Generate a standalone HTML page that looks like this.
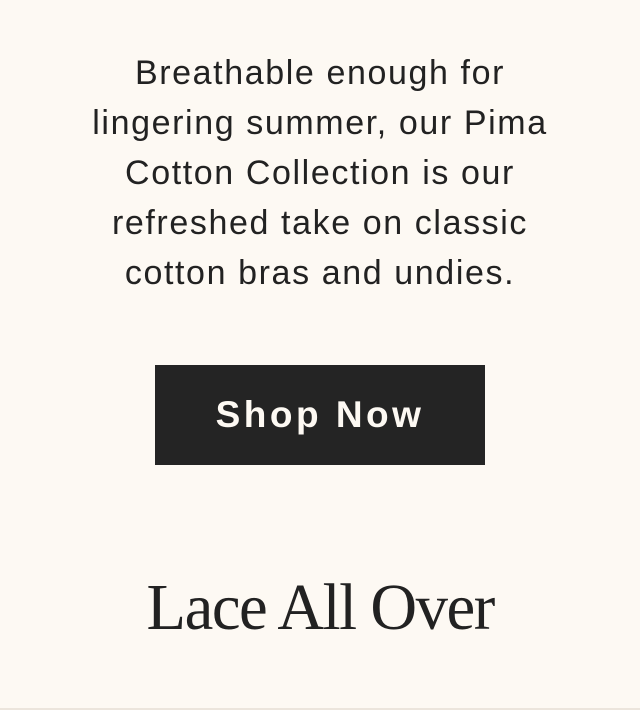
<!DOCTYPE html>
<html><head><style>
html,body{margin:0;padding:0;}
body{width:640px;height:710px;background:#fdf9f3;position:relative;overflow:hidden;}
.p{position:absolute;left:0;width:640px;top:48px;text-align:center;font-family:"Liberation Sans",sans-serif;font-size:34px;line-height:50px;color:#222;letter-spacing:1.6px;}
.btn{position:absolute;left:155px;top:365px;width:330px;height:100px;background:#242424;color:#fdf9f3;font-family:"Liberation Sans",sans-serif;font-weight:bold;font-size:37px;letter-spacing:3.5px;text-align:center;line-height:100px;}
.h{position:absolute;left:0;width:640px;top:568px;text-align:center;font-family:"Liberation Serif",serif;font-size:66px;line-height:80px;color:#222;letter-spacing:-1.5px;}
.h span{display:inline-block;transform:scaleX(0.98);}
.line{position:absolute;left:0;top:708px;width:640px;height:2px;background:#ece5dc;}
</style></head><body>
<div class="p">Breathable enough for<br>lingering summer, our Pima<br>Cotton Collection is our<br>refreshed take on classic<br>cotton bras and undies.</div>
<div class="btn">Shop Now</div>
<div class="h"><span>Lace All Over</span></div>
<div class="line"></div>
</body></html>
